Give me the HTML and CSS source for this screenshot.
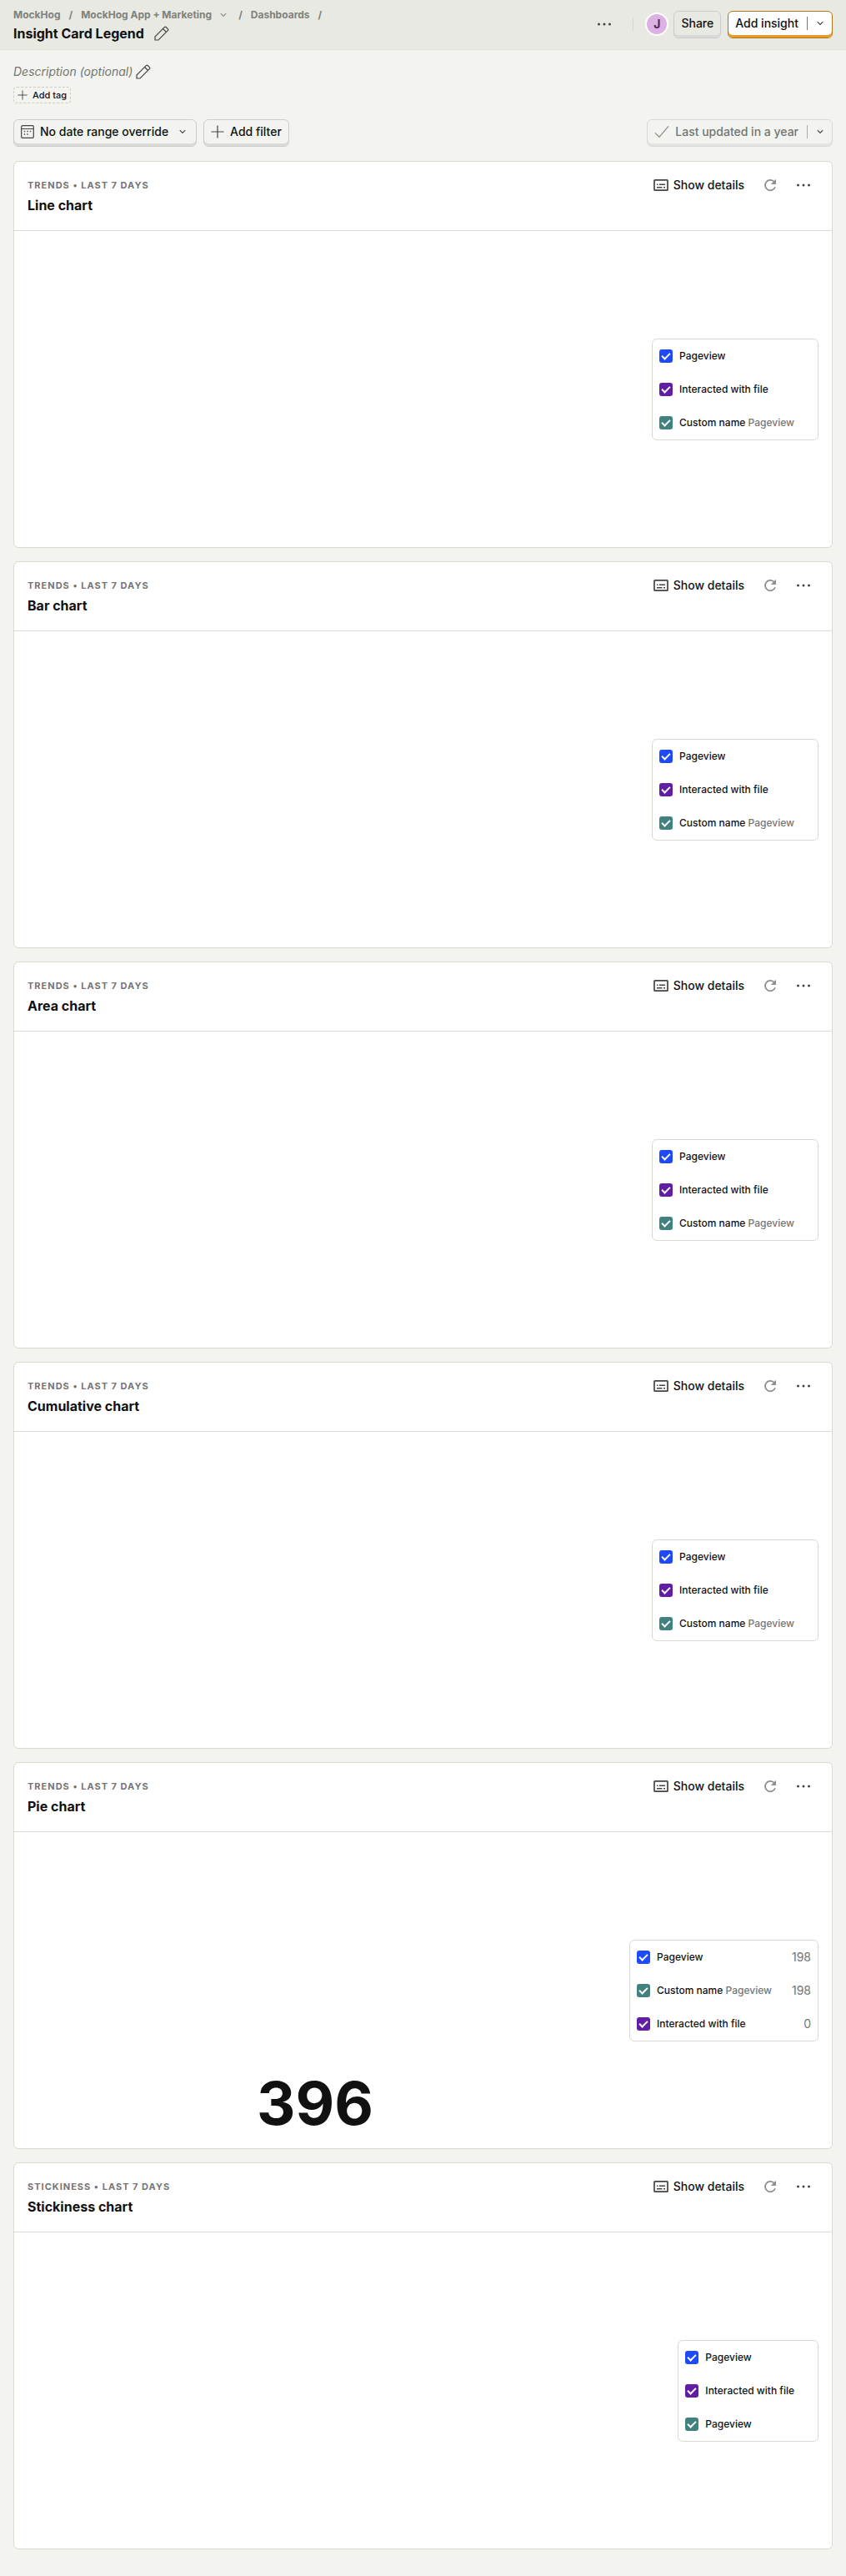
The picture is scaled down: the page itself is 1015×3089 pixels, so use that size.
FILE: index.html
```
<!DOCTYPE html>
<html lang="en">
<head>
<meta charset="utf-8">
<title>Insight Card Legend</title>
<link rel="stylesheet" href="styles.css">
</head>
<body>
<svg class="sprite" aria-hidden="true">
  <symbol id="pencil" viewBox="0 0 18 18"><path d="M1 17v-4L12.300 1.700a1.500 1.500 0 0 1 2.100 0l1.900 1.900a1.500 1.500 0 0 1 0 2.100L5 17zM10.500 3.500l4 4" fill="none" stroke="currentColor" stroke-width="1.200"/></symbol>
  <symbol id="chevron" viewBox="0 0 8 8"><path d="M0.800 2.200L4 5.400l3.200-3.200" fill="none" stroke="currentColor" stroke-width="1.200"/></symbol>
  <symbol id="plus" viewBox="0 0 16 16"><path d="M8 .5v15M.5 8h15" fill="none" stroke="currentColor" stroke-width="1.200"/></symbol>
  <symbol id="calendar" viewBox="0 0 16 16"><path d="M2 .7h12A1.300 1.300 0 0 1 15.300 2v12a1.300 1.300 0 0 1-1.300 1.300H2A1.300 1.300 0 0 1 .7 14V2A1.300 1.300 0 0 1 2 .7zM.7 4.500h14.600" fill="none" stroke="currentColor" stroke-width="1.200"/><path d="M7.300 7.500h1.400M10.800 7.500h1.400M3.800 7.500h1.400M3.800 11h1.400M7.300 11h1.400" stroke="currentColor" stroke-width="1.300"/></symbol>
  <symbol id="check" viewBox="0 0 18 16"><path d="M1 9.300l5 5L17 1.300" fill="none" stroke="currentColor" stroke-width="1.200"/></symbol>
  <symbol id="details" viewBox="0 0 18 16"><rect x="1" y="1.800" width="16" height="12.400" rx=".8" fill="none" stroke="currentColor" stroke-width="1.700"/><path d="M4 7.200h1.500M7 7.200h7M4 10.800h6.500M12 10.800h2" stroke="currentColor" stroke-width="1.500"/></symbol>
  <symbol id="refresh" viewBox="0 0 16 16"><path d="M14 10.300A6.200 6.200 0 1 1 12.500 3.600L13.500 4.600" fill="none" stroke="currentColor" stroke-width="1.800"/><path d="M15 .8v6.200H8.800z" fill="currentColor"/></symbol>
  <symbol id="dots" viewBox="0 0 18 18"><g fill="currentColor"><circle cx="2.500" cy="9" r="1.500"/><circle cx="9" cy="9" r="1.500"/><circle cx="15.500" cy="9" r="1.500"/></g></symbol>
</svg>

<header class="top">
  <div class="top-left">
    <nav class="crumbs" aria-label="Breadcrumb">
      <a href="#">MockHog</a><span>/</span>
      <a href="#" class="project">MockHog App + Marketing <svg class="chev"><use href="#chevron"/></svg></a><span>/</span>
      <a href="#">Dashboards</a><span>/</span>
    </nav>
    <div class="title-row">
      <h1>Insight Card Legend</h1>
      <button class="icon-btn" aria-label="Edit name"><svg class="i18"><use href="#pencil"/></svg></button>
    </div>
  </div>
  <div class="top-right">
    <button class="icon-btn more" aria-label="More"><svg class="i18"><use href="#dots"/></svg></button>
    <span class="divider"></span>
    <span class="avatar">J</span>
    <button class="btn">Share</button>
    <div class="btn split primary">
      <button class="part">Add insight</button>
      <button class="part side" aria-label="More ways to add"><svg class="chev"><use href="#chevron"/></svg></button>
    </div>
  </div>
</header>

<main>
  <div class="description">
    <em>Description (optional)</em>
    <button class="icon-btn" aria-label="Edit description"><svg class="i18"><use href="#pencil"/></svg></button>
  </div>
  <button class="tag"><svg class="i12"><use href="#plus"/></svg>Add tag</button>

  <div class="toolbar">
    <button class="btn"><svg class="i16"><use href="#calendar"/></svg>No date range override<svg class="chev wide"><use href="#chevron"/></svg></button>
    <button class="btn"><svg class="i16"><use href="#plus"/></svg>Add filter</button>
    <div class="btn split muted">
      <button class="part" disabled><svg class="i18"><use href="#check"/></svg>Last updated in a year</button>
      <button class="part side" aria-label="Refresh options"><svg class="chev"><use href="#chevron"/></svg></button>
    </div>
  </div>

  <div class="cards">
    <section class="card">
      <div class="card-head">
        <div><p class="kind">Trends • Last 7 days</p><h2>Line chart</h2></div>
        <div class="actions">
          <button class="show"><svg class="i18"><use href="#details"/></svg>Show details</button>
          <button class="icon-btn reload" aria-label="Refresh"><svg class="i16"><use href="#refresh"/></svg></button>
          <button class="icon-btn" aria-label="More"><svg class="i18"><use href="#dots"/></svg></button>
        </div>
      </div>
      <div class="card-body">
        <div class="chart"></div>
        <div class="legend">
          <label><input type="checkbox" class="blue" checked><span>Pageview</span></label>
          <label><input type="checkbox" class="purple" checked><span>Interacted with file</span></label>
          <label><input type="checkbox" class="teal" checked><span>Custom name <i>Pageview</i></span></label>
        </div>
      </div>
    </section>

    <section class="card">
      <div class="card-head">
        <div><p class="kind">Trends • Last 7 days</p><h2>Bar chart</h2></div>
        <div class="actions">
          <button class="show"><svg class="i18"><use href="#details"/></svg>Show details</button>
          <button class="icon-btn reload" aria-label="Refresh"><svg class="i16"><use href="#refresh"/></svg></button>
          <button class="icon-btn" aria-label="More"><svg class="i18"><use href="#dots"/></svg></button>
        </div>
      </div>
      <div class="card-body">
        <div class="chart"></div>
        <div class="legend">
          <label><input type="checkbox" class="blue" checked><span>Pageview</span></label>
          <label><input type="checkbox" class="purple" checked><span>Interacted with file</span></label>
          <label><input type="checkbox" class="teal" checked><span>Custom name <i>Pageview</i></span></label>
        </div>
      </div>
    </section>

    <section class="card">
      <div class="card-head">
        <div><p class="kind">Trends • Last 7 days</p><h2>Area chart</h2></div>
        <div class="actions">
          <button class="show"><svg class="i18"><use href="#details"/></svg>Show details</button>
          <button class="icon-btn reload" aria-label="Refresh"><svg class="i16"><use href="#refresh"/></svg></button>
          <button class="icon-btn" aria-label="More"><svg class="i18"><use href="#dots"/></svg></button>
        </div>
      </div>
      <div class="card-body">
        <div class="chart"></div>
        <div class="legend">
          <label><input type="checkbox" class="blue" checked><span>Pageview</span></label>
          <label><input type="checkbox" class="purple" checked><span>Interacted with file</span></label>
          <label><input type="checkbox" class="teal" checked><span>Custom name <i>Pageview</i></span></label>
        </div>
      </div>
    </section>

    <section class="card">
      <div class="card-head">
        <div><p class="kind">Trends • Last 7 days</p><h2>Cumulative chart</h2></div>
        <div class="actions">
          <button class="show"><svg class="i18"><use href="#details"/></svg>Show details</button>
          <button class="icon-btn reload" aria-label="Refresh"><svg class="i16"><use href="#refresh"/></svg></button>
          <button class="icon-btn" aria-label="More"><svg class="i18"><use href="#dots"/></svg></button>
        </div>
      </div>
      <div class="card-body">
        <div class="chart"></div>
        <div class="legend">
          <label><input type="checkbox" class="blue" checked><span>Pageview</span></label>
          <label><input type="checkbox" class="purple" checked><span>Interacted with file</span></label>
          <label><input type="checkbox" class="teal" checked><span>Custom name <i>Pageview</i></span></label>
        </div>
      </div>
    </section>

    <section class="card">
      <div class="card-head">
        <div><p class="kind">Trends • Last 7 days</p><h2>Pie chart</h2></div>
        <div class="actions">
          <button class="show"><svg class="i18"><use href="#details"/></svg>Show details</button>
          <button class="icon-btn reload" aria-label="Refresh"><svg class="i16"><use href="#refresh"/></svg></button>
          <button class="icon-btn" aria-label="More"><svg class="i18"><use href="#dots"/></svg></button>
        </div>
      </div>
      <div class="card-body">
        <div class="chart"><p class="total">396</p></div>
        <div class="legend counted">
          <label><input type="checkbox" class="blue" checked><span>Pageview</span><b>198</b></label>
          <label><input type="checkbox" class="teal" checked><span>Custom name <i>Pageview</i></span><b>198</b></label>
          <label><input type="checkbox" class="purple" checked><span>Interacted with file</span><b>0</b></label>
        </div>
      </div>
    </section>

    <section class="card">
      <div class="card-head">
        <div><p class="kind">Stickiness • Last 7 days</p><h2>Stickiness chart</h2></div>
        <div class="actions">
          <button class="show"><svg class="i18"><use href="#details"/></svg>Show details</button>
          <button class="icon-btn reload" aria-label="Refresh"><svg class="i16"><use href="#refresh"/></svg></button>
          <button class="icon-btn" aria-label="More"><svg class="i18"><use href="#dots"/></svg></button>
        </div>
      </div>
      <div class="card-body">
        <div class="chart"></div>
        <div class="legend">
          <label><input type="checkbox" class="blue" checked><span>Pageview</span></label>
          <label><input type="checkbox" class="purple" checked><span>Interacted with file</span></label>
          <label><input type="checkbox" class="teal" checked><span>Pageview</span></label>
        </div>
      </div>
    </section>
  </div>
</main>
</body>
</html>
```
FILE: styles.css
```
* { box-sizing: border-box; }
body { margin: 0; background: #f3f4ef; color: #111; font: 14px/20px Inter, "Liberation Sans", sans-serif; font-optical-sizing: none; }
h1, h2, p { margin: 0; }
h1, h2 { font-size: 16px; line-height: 24px; font-weight: 700; }
button { font: inherit; color: inherit; background: none; border: 0; padding: 0; margin: 0; }
svg { display: block; flex: none; color: #444; }
.sprite { display: none; }
.i12 { width: 12px; height: 12px; }
.i16 { width: 16px; height: 16px; }
.i18 { width: 18px; height: 18px; }
.chev { width: 8px; height: 8px; }

.top { display: flex; justify-content: space-between; min-height: 60px; padding: 8px 16px 0; background: #e8e9e2; border-bottom: 1px solid #e0e1da; }
.crumbs { display: flex; gap: 10px; font-size: 12px; line-height: 20px; font-weight: 700; color: #7f817c; }
.crumbs a { color: inherit; text-decoration: none; }
.crumbs .project { display: flex; align-items: center; gap: 10px; padding-right: 4px; }
.crumbs svg { color: #8a8b86; }
.title-row { display: flex; align-items: center; gap: 12px; }
.description { display: flex; align-items: center; gap: 4px; }
.top-right { display: flex; align-items: center; gap: 8px; height: 42px; }
.more { width: 36px; display: grid; place-items: center; }
.divider { width: 1px; height: 16px; margin: 0 6px 0 8px; background: #d5d6cf; }
.avatar { display: grid; place-items: center; width: 28px; height: 28px; margin-right: -2px; border: 2px solid #fff; border-radius: 50%; background: #dcb1e3; color: #54275e; font-weight: 700; }

.btn { display: flex; align-items: center; gap: 7px; height: 33px; padding: 0 8px 3px; border: 1px solid #ccc; border-radius: 6px; box-shadow: inset 0 -3px #dcdad9; font-weight: 500; }
.split { gap: 10px; }
.part { display: flex; align-items: center; gap: 6px; }
.part.side { height: 16px; padding: 0 2px 0 11px; border-left: 1px solid #777; }
.primary { border-color: #b17816; box-shadow: inset 0 -3px #e89a2c; background: #fff; }
.muted { margin-left: auto; border-color: #d9dad5; box-shadow: inset 0 -3px #e4e5e0; }
.muted .part { color: #73746f; gap: 7px; }
.muted .part.side { border-color: #aaa; }
.muted .i18 { color: #8a8b86; }
.wide { margin: 0 4px 0 6px; }

main { padding: 16px 16px 32px; }
.description em { color: #73746f; }
.tag { display: flex; align-items: center; gap: 6px; height: 20px; margin-top: 8px; padding: 0 4px; border: 1px dashed #ccccc5; border-radius: 4px; font-size: 11px; font-weight: 500; }
.toolbar { display: flex; gap: 8px; margin: 19px 0 17px; }

.cards { display: grid; gap: 16px; }
.card { display: flex; flex-direction: column; height: 464px; background: #fff; border: 1px solid #d9dad0; border-radius: 6px; }
.card-head { display: flex; justify-content: space-between; padding: 20px 16px 18px; border-bottom: 1px solid #d9dad0; }
.kind { font-size: 11px; line-height: 16px; font-weight: 700; letter-spacing: 1px; text-transform: uppercase; color: #757575; margin-bottom: 4px; }
.actions { display: flex; align-items: center; gap: 23px; height: 16px; padding-right: 9px; }
.show { display: flex; align-items: center; gap: 6px; font-weight: 500; }
.reload svg { color: #8f8f8f; }
.card-body { flex: 1; display: flex; align-items: center; gap: 16px; padding-right: 16px; }
.chart { flex: 1; align-self: stretch; display: flex; align-items: flex-end; justify-content: center; }
.total { font-size: 72px; line-height: 76px; font-weight: 700; margin-bottom: 16px; }
.legend { padding-right: 20px; border: 1px solid #d9dad0; border-radius: 6px; }
.legend label { display: flex; align-items: center; gap: 8px; height: 40px; padding: 0 8px; font-size: 12px; font-weight: 500; }
.legend i { font-style: normal; color: #757575; }
.counted { padding-right: 0; }
.legend b { margin-left: auto; padding-left: 16px; font-size: 14px; font-weight: 400; color: #757575; }
input { appearance: none; width: 16px; height: 16px; margin: 0; border-radius: 3px; display: grid; place-items: center; }
input::before { content: ""; width: 8px; height: 4px; margin-bottom: 2px; border: solid #fff; border-width: 0 0 2px 2px; transform: rotate(-45deg); }
.blue { background: #1d4aff; }
.purple { background: #621da6; }
.teal { background: #42827e; }
```
